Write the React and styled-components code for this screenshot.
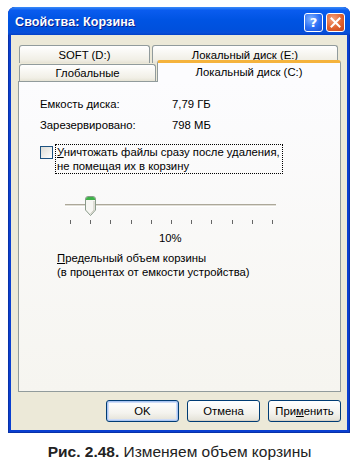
import React from 'react';
import styled, {createGlobalStyle} from 'styled-components';

const Global = createGlobalStyle`
  html, body {
    margin: 0;
    padding: 0;
    background: #fff;
  }
  body {
    font-family: "Liberation Sans", Arial, sans-serif;
  }
`

const Page = styled.div`
  width: 359px;
  height: 467px;
  padding: 7px 0 0 8px;
  box-sizing: border-box;
  display: flex;
  flex-direction: column;
`

const Window = styled.div`
  width: 342px;
  display: flex;
  flex-direction: column;
  background: #0a3fd0;
  border-radius: 7px 7px 0 0;
  box-shadow: inset 0 0 0 1px #0831a8;
`

const TitleBar = styled.div`
  height: 28px;
  display: flex;
  align-items: flex-start;
  padding: 0 5px 0 7px;
  border-radius: 7px 7px 0 0;
  background: linear-gradient(#3a8bf8 0%, #0a5cef 12%, #0054e3 45%, #0050dd 80%, #0a4fd8 92%, #0341c8 100%);
`

const Title = styled.div`
  flex: 1;
  margin-top: 8px;
  font-family: "Liberation Sans", Arial, sans-serif;
  font-weight: bold;
  font-size: 12.5px;
  color: #fff;
  text-shadow: 1px 1px 0 #0a1e8c;
  letter-spacing: 0.1px;
`

const CaptionButtons = styled.div`
  display: flex;
  gap: 3px;
  margin-top: 6px;
`

const CapBtn = styled.div`
  width: 19px;
  height: 19px;
  box-sizing: border-box;
  border: 1px solid #fff;
  border-radius: 3px;
  display: flex;
  align-items: center;
  justify-content: center;
  color: #fff;
  font-family: "DejaVu Sans", sans-serif;
  font-weight: bold;
  font-size: 13px;
  background: ${p => p.$close
    ? 'radial-gradient(circle at 35% 30%, #f3a17e 0%, #e0622f 55%, #c2421c 100%)'
    : 'radial-gradient(circle at 35% 30%, #7fb2ff 0%, #2a6ef5 55%, #1b4fd0 100%)'};
`

const Body = styled.div`
  margin: 0 3px 3px 3px;
  background: #ece9d8;
  padding: 10px 6px 8px 7px;
  display: flex;
  flex-direction: column;
`

const Tabs = styled.div`
  display: flex;
  flex-direction: column;
`

const TabRow = styled.div`
  display: flex;
  align-items: flex-end;
  gap: ${p => p.$gap}px;
  padding-left: 1px;
  height: ${p => p.$h}px;
`

const Tab = styled.div`
  width: ${p => p.$w}px;
  height: ${p => p.$h}px;
  box-sizing: border-box;
  border: 1px solid #919b9c;
  border-bottom: none;
  border-radius: 3px 3px 0 0;
  display: flex;
  align-items: center;
  justify-content: center;
  font-size: 11.3px;
  color: #000;
  background: linear-gradient(#ffffff, #f1efe6 80%, #e6e3d5);
`

const ActiveTab = styled(Tab)`
  margin-bottom: -1px;
  position: relative;
  z-index: 1;
  border-top: 3px solid #f5b33c;
  background: #fcfcfe;
  padding-bottom: 2px;
`

const Panel = styled.div`
  height: 311px;
  box-sizing: border-box;
  border: 1px solid #919b9c;
  background: linear-gradient(#fcfcfe, #f6f5f0);
  padding: 11px 0 0 21px;
  display: flex;
  flex-direction: column;
  font-size: 11.3px;
  color: #000;
`

const InfoRow = styled.div`
  display: grid;
  grid-template-columns: 132px auto;
  height: 21px;
  align-items: center;
`

const CheckRow = styled.div`
  display: flex;
  align-items: flex-start;
  gap: 2px;
  margin-top: 9px;
`

const Box = styled.div`
  width: 13px;
  height: 13px;
  box-sizing: border-box;
  border: 1px solid #1c5180;
  background: linear-gradient(135deg, #dcdbd5, #ffffff);
  margin-top: 2px;
`

const Focus = styled.div`
  border: 1px dotted #000;
  padding: 0 2px 0 1px;
  line-height: 14px;
`

const U = styled.span`
  text-decoration: underline;
`

const Slider = styled.div`
  margin: 22px 0 0 25px;
  width: 211px;
  display: flex;
  flex-direction: column;
`

const Track = styled.div`
  height: 20px;
  position: relative;
  &:before {
    content: '';
    position: absolute;
    left: 0;
    right: 0;
    top: 8px;
    background: #e0ded6;
    border-top: 1px solid #aca899;
    border-bottom: 1px solid #fff;
    box-sizing: border-box;
    height: 3px;
  }
`

const Thumb = styled.svg`
  position: absolute;
  left: 20px;
  top: 0;
`

const Ticks = styled.div`
  display: flex;
  justify-content: space-between;
  padding: 4px 3px 0 5px;
`

const Tick = styled.div`
  width: 1px;
  height: 4px;
  background: #666;
`

const Percent = styled.div`
  margin: 8px 0 0 119px;
`

const Limit = styled.div`
  margin: 7px 0 0 17px;
  line-height: 14px;
`

const Buttons = styled.div`
  display: flex;
  justify-content: flex-end;
  gap: 8px;
  margin-top: 8px;
`

const Button = styled.div`
  width: 73px;
  height: 22px;
  box-sizing: border-box;
  border: 1px solid #003c74;
  border-radius: 3px;
  display: flex;
  align-items: center;
  justify-content: center;
  font-size: 11.3px;
  color: #000;
  background: linear-gradient(#ffffff, #f4f3ee 60%, #e3e1d6);
  box-shadow: ${p => p.$def
    ? 'inset 0 0 0 1px #a9c4f2, inset 0 0 0 2px #cedcf7'
    : 'inset 0 -1px 0 #d6d0c5'};
`

const Caption = styled.div`
  margin: 10px 0 0 -8px;
  width: 359px;
  text-align: center;
  font-size: 15.5px;
  color: #222;
  b {
    font-weight: bold;
  }
`

const App = () => {
    return (
        <Page>
            <Global/>
            <Window>
                <TitleBar>
                    <Title>Свойства: Корзина</Title>
                    <CaptionButtons>
                        <CapBtn>?</CapBtn>
                        <CapBtn $close>
                            <svg width="11" height="11" viewBox="0 0 11 11">
                                <path d="M1.5 1.5 L9.5 9.5 M9.5 1.5 L1.5 9.5" stroke="#fff" strokeWidth="2" strokeLinecap="square"/>
                            </svg>
                        </CapBtn>
                    </CaptionButtons>
                </TitleBar>
                <Body>
                    <Tabs>
                        <TabRow $h={18} $gap={2}>
                            <Tab $w={131} $h={18}>SOFT (D:)</Tab>
                            <Tab $w={186} $h={18}>Локальный диск (E:)</Tab>
                        </TabRow>
                        <TabRow $h={18} $gap={1}>
                            <Tab $w={137} $h={17}>Глобальные</Tab>
                            <ActiveTab $w={184} $h={22}>Локальный диск (C:)</ActiveTab>
                        </TabRow>
                    </Tabs>
                    <Panel>
                        <InfoRow><span>Емкость диска:</span><span>7,79 ГБ</span></InfoRow>
                        <InfoRow><span>Зарезервировано:</span><span>798 МБ</span></InfoRow>
                        <CheckRow>
                            <Box/>
                            <Focus>
                                <U>У</U>ничтожать файлы сразу после удаления,<br/>
                                не помещая их в корзину
                            </Focus>
                        </CheckRow>
                        <Slider>
                            <Track>
                                <Thumb width="11" height="20" viewBox="0 0 11 20">
                                    <path d="M0.5 3 Q0.5 0.5 3 0.5 L8 0.5 Q10.5 0.5 10.5 3 L10.5 14 L5.5 19.5 L0.5 14 Z" fill="#f6f6f2" stroke="#8a9a8a"/>
                                    <path d="M1 3 Q1 1 3 1 L8 1 Q10 1 10 3 L10 4 L1 4 Z" fill="#3fb24a"/>
                                    <path d="M9 5 L9 14 L5.5 18" fill="none" stroke="#c9c7ba"/>
                                </Thumb>
                            </Track>
                            <Ticks>
                                {Array.from({length: 11}).map((_, i) => <Tick key={i}/>)}
                            </Ticks>
                        </Slider>
                        <Percent>10%</Percent>
                        <Limit>
                            <U>П</U>редельный объем корзины<br/>
                            (в процентах от емкости устройства)
                        </Limit>
                    </Panel>
                    <Buttons>
                        <Button $def>OK</Button>
                        <Button>Отмена</Button>
                        <Button>При<U>м</U>енить</Button>
                    </Buttons>
                </Body>
            </Window>
            <Caption><b>Рис. 2.48.</b> Изменяем объем корзины</Caption>
        </Page>
    );
};

export default App;
